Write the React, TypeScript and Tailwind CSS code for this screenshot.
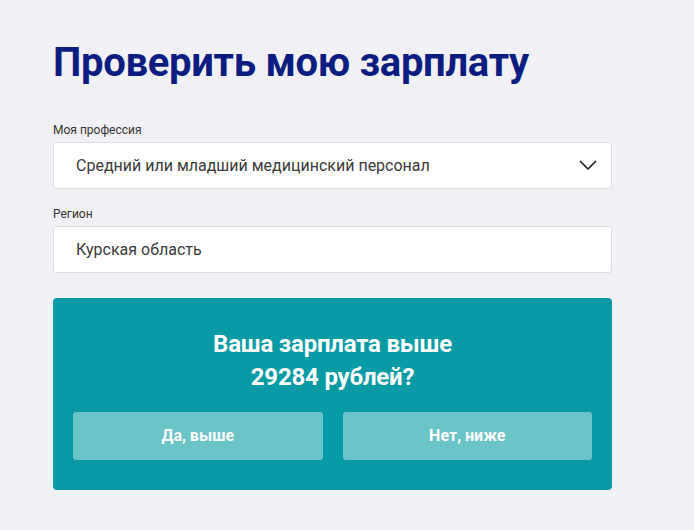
import React from 'react';

function ChevronDown() {
  return (
    <svg width="18" height="11" viewBox="0 0 18 11" fill="none" className="shrink-0">
      <path d="M1.5 1.5L9 9L16.5 1.5" stroke="#222" strokeWidth="1.75" strokeLinecap="round" strokeLinejoin="round" />
    </svg>
  );
}

export default function App() {
  return (
    <div className="min-h-[530px] w-full bg-[#f1f1f5] font-['Roboto',sans-serif]">
      <div className="w-[559px] ml-[53px] pt-[35px]">
        <h1 className="text-[40px] leading-[56px] font-bold tracking-[-0.3px] text-[#0b1d80]">
          Проверить мою зарплату
        </h1>

        {/* Profession */}
        <div className="mt-[31px]">
          <label className="block text-[12px] leading-[16px] text-[#333]">Моя профессия</label>
          <div className="mt-[4px] h-[47px] flex items-center justify-between pl-[22px] pr-[14px] bg-white border border-[#dcdce3] rounded-[3px]">
            <span className="text-[16px] text-[#3a3a3a]">Средний или младший медицинский персонал</span>
            <ChevronDown />
          </div>
        </div>

        {/* Region */}
        <div className="mt-[17px]">
          <label className="block text-[12px] leading-[16px] text-[#333]">Регион</label>
          <div className="mt-[4px] h-[47px] flex items-center pl-[22px] bg-white border border-[#dcdce3] rounded-[3px]">
            <span className="text-[16px] text-[#3a3a3a]">Курская область</span>
          </div>
        </div>

        {/* Question card */}
        <div className="mt-[25px] h-[192px] bg-[#089aa5] rounded-[4px] px-[20px] pt-[30px]">
          <p className="text-center text-white font-bold text-[24px] leading-[33px] tracking-[-0.2px]">
            Ваша зарплата выше
            <br />
            29284 рублей?
          </p>
          <div className="mt-[18px] grid grid-cols-2 gap-[20px]">
            <button className="h-[48px] rounded-[3px] bg-[#6bc4c8] text-white font-bold text-[16px]">Да, выше</button>
            <button className="h-[48px] rounded-[3px] bg-[#6bc4c8] text-white font-bold text-[16px]">Нет, ниже</button>
          </div>
        </div>
      </div>
    </div>
  );
}
